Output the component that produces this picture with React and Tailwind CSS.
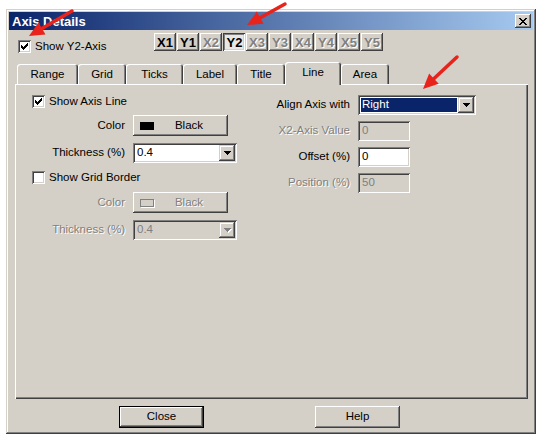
import React from "react";

function Check({ checked }) {
  const px = [
    [6, 0], [5, 1], [6, 1], [0, 2], [4, 2], [5, 2], [6, 2], [0, 3], [1, 3], [3, 3], [4, 3], [5, 3],
    [0, 4], [1, 4], [2, 4], [3, 4], [4, 4], [1, 5], [2, 5], [3, 5], [2, 6],
  ];
  return (
    <div className="w-[13px] h-[13px] shrink-0 bg-white shadow-[inset_1px_1px_0_#808080,inset_-1px_-1px_0_#fff,inset_2px_2px_0_#404040,inset_-2px_-2px_0_#d4d0c8] flex items-center justify-center">
      {checked && (
        <svg width="7" height="7" viewBox="0 0 7 7" shapeRendering="crispEdges">
          {px.map(([x, y], i) => (
            <rect key={i} x={x} y={y} width="1" height="1" fill="#000" />
          ))}
        </svg>
      )}
    </div>
  );
}

function DownArrow({ disabled }) {
  return (
    <svg width="8" height="5" viewBox="0 0 8 5" shapeRendering="crispEdges">
      {disabled && (
        <g fill="#fff">
          <rect x="1" y="1" width="7" height="1" />
          <rect x="2" y="2" width="5" height="1" />
          <rect x="3" y="3" width="3" height="1" />
          <rect x="4" y="4" width="1" height="1" />
        </g>
      )}
      <g fill={disabled ? "#808080" : "#000"}>
        <rect x="0" y="0" width="7" height="1" />
        <rect x="1" y="1" width="5" height="1" />
        <rect x="2" y="2" width="3" height="1" />
        <rect x="3" y="3" width="1" height="1" />
      </g>
    </svg>
  );
}

function DropBtn({ disabled }) {
  return (
    <div className="w-[16px] h-[16px] shrink-0 bg-[#d4d0c8] shadow-[inset_-1px_-1px_0_#404040,inset_1px_1px_0_#d4d0c8,inset_-2px_-2px_0_#808080,inset_2px_2px_0_#fff] flex items-center justify-center pl-px">
      <DownArrow disabled={disabled} />
    </div>
  );
}

function AxisBtn({ label, state }) {
  if (state === "pressed") {
    return (
      <div className="w-[22px] h-[18px] bg-[#e9e7e3] shadow-[inset_1px_1px_0_#404040,inset_-1px_-1px_0_#fff,inset_2px_2px_0_#808080,inset_-2px_-2px_0_#d4d0c8] flex items-center justify-center pt-px pl-px font-bold text-[13px] text-black">
        {label}
      </div>
    );
  }
  return (
    <div
      className={
        state === "disabled"
          ? "w-[22px] h-[18px] bg-[#d4d0c8] shadow-[inset_-1px_-1px_0_#404040,inset_1px_1px_0_#fff,inset_-2px_-2px_0_#808080,inset_2px_2px_0_#d4d0c8] flex items-center justify-center font-bold text-[13px] text-[#808080] [text-shadow:1px_1px_0_#fff]"
          : "w-[22px] h-[18px] bg-[#d4d0c8] shadow-[inset_-1px_-1px_0_#404040,inset_1px_1px_0_#fff,inset_-2px_-2px_0_#808080,inset_2px_2px_0_#d4d0c8] flex items-center justify-center font-bold text-[13px] text-black"
      }
    >
      {label}
    </div>
  );
}

function Tab({ label, w, selected }) {
  if (selected) {
    return (
      <div
        className="relative z-10 h-[23px] mb-[-1px] bg-[#d4d0c8] rounded-t-[3px] shadow-[inset_1px_1px_0_#fff,inset_-1px_0_0_#404040,inset_-2px_0_0_#808080] flex items-start justify-center pt-[5px]"
        style={{ width: w }}
      >
        {label}
      </div>
    );
  }
  return (
    <div
      className="h-[20px] bg-[#d4d0c8] rounded-t-[3px] shadow-[inset_1px_1px_0_#fff,inset_-1px_0_0_#404040,inset_-2px_0_0_#808080] flex items-center justify-center pt-px"
      style={{ width: w }}
    >
      {label}
    </div>
  );
}

function Arrow({ x1, y1, x2, y2 }) {
  const dx = x2 - x1;
  const dy = y2 - y1;
  const len = Math.hypot(dx, dy);
  const ux = dx / len;
  const uy = dy / len;
  const hl = 15;
  const hw = 7;
  const bx = x2 - ux * hl;
  const by = y2 - uy * hl;
  const px = -uy;
  const py = ux;
  const pts = `${x2},${y2} ${bx + px * hw},${by + py * hw} ${bx - px * hw},${by - py * hw}`;
  return (
    <g>
      <line x1={x1} y1={y1} x2={bx + ux * 2} y2={by + uy * 2} stroke="#e8231c" strokeWidth="3.5" strokeLinecap="round" />
      <polygon points={pts} fill="#e8231c" />
    </g>
  );
}

const Label = ({ children, disabled, w }) => (
  <div
    className={
      disabled
        ? "flex justify-end whitespace-nowrap mr-[8px] text-[#808080] [text-shadow:1px_1px_0_#fff]"
        : "flex justify-end whitespace-nowrap mr-[8px]"
    }
    style={{ width: w }}
  >
    {children}
  </div>
);

export default function App() {
  const axes = [
    ["X1", "on"], ["Y1", "on"], ["X2", "disabled"], ["Y2", "pressed"], ["X3", "disabled"],
    ["Y3", "disabled"], ["X4", "disabled"], ["Y4", "disabled"], ["X5", "disabled"], ["Y5", "disabled"],
  ];
  return (
    <div className="relative w-[544px] h-[441px] bg-white overflow-hidden pt-[9px] pl-[6px] font-['Liberation_Sans',Arial,sans-serif] text-[11.5px] text-black leading-none">
      <div className="w-[530px] h-[425px] bg-[#d4d0c8] p-[3px] shadow-[inset_-1px_-1px_0_#404040,inset_1px_1px_0_#d4d0c8,inset_-2px_-2px_0_#808080,inset_2px_2px_0_#fff] flex flex-col">
        {/* Title bar */}
        <div className="h-[18px] shrink-0 flex items-center justify-between pl-[3px] pr-[2px] bg-[linear-gradient(to_right,#0a246a,#a6caf0)]">
          <span className="text-white font-bold text-[13px]">Axis Details</span>
          <div className="w-[16px] h-[14px] bg-[#d4d0c8] shadow-[inset_-1px_-1px_0_#404040,inset_1px_1px_0_#fff,inset_-2px_-2px_0_#808080,inset_2px_2px_0_#d4d0c8] flex items-center justify-center">
            <svg width="8" height="7" viewBox="0 0 8 7" shapeRendering="crispEdges">
              <path d="M0 0h2v1h1v1h2V1h1V0h2v1H7v1H6v1H5v1h1v1h1v1h1v1H6V6H5V5H3v1H2v1H0V6h1V5h1V4h1V3H2V2H1V1H0z" fill="#000" />
            </svg>
          </div>
        </div>

        {/* Y2 checkbox + axis buttons */}
        <div className="mt-[3px] flex items-start">
          <div className="ml-[9px] w-[136px] pt-[7px] flex items-center gap-[4px]">
            <Check checked />
            <span>Show Y2-Axis</span>
          </div>
          <div className="flex gap-px">
            {axes.map(([l, s]) => (
              <AxisBtn key={l} label={l} state={s} />
            ))}
          </div>
        </div>

        {/* Tabs + panel */}
        <div className="mt-[9px] ml-[6px] flex flex-col">
          <div className="h-[22px] flex items-end pl-[2px]">
            <Tab label="Range" w={61} />
            <Tab label="Grid" w={48} />
            <Tab label="Ticks" w={57} />
            <Tab label="Label" w={54} />
            <Tab label="Title" w={48} />
            <Tab label="Line" w={56} selected />
            <Tab label="Area" w={48} />
          </div>
          <div className="w-[513px] h-[315px] bg-[#d4d0c8] shadow-[inset_1px_1px_0_#fff,inset_-1px_-1px_0_#404040,inset_-2px_-2px_0_#808080] flex pl-[17px] pt-[11px]">
            {/* Left column */}
            <div className="w-[205px] flex flex-col">
              <div className="flex items-center gap-[4px] h-[13px]">
                <Check checked />
                <span>Show Axis Line</span>
              </div>
              <div className="flex items-center mt-[7px]">
                <Label w={93}>Color</Label>
                <div className="w-[95px] h-[21px] bg-[#d4d0c8] shadow-[inset_-1px_-1px_0_#404040,inset_1px_1px_0_#fff,inset_-2px_-2px_0_#808080,inset_2px_2px_0_#d4d0c8] flex items-center pl-[7px] pr-[4px]">
                  <div className="w-[14px] h-[8px] bg-black" />
                  <span className="flex-1 text-center">Black</span>
                </div>
              </div>
              <div className="flex items-center mt-[7px]">
                <Label w={93}>Thickness (%)</Label>
                <div className="w-[104px] h-[20px] bg-white shadow-[inset_1px_1px_0_#808080,inset_-1px_-1px_0_#fff,inset_2px_2px_0_#404040,inset_-2px_-2px_0_#d4d0c8] flex items-center pl-[4px] pr-[2px]">
                  <span className="flex-1">0.4</span>
                  <DropBtn />
                </div>
              </div>
              <div className="flex items-center gap-[4px] h-[13px] mt-[8px]">
                <Check />
                <span>Show Grid Border</span>
              </div>
              <div className="flex items-center mt-[8px]">
                <Label w={93} disabled>Color</Label>
                <div className="w-[95px] h-[21px] bg-[#d4d0c8] shadow-[inset_-1px_-1px_0_#404040,inset_1px_1px_0_#fff,inset_-2px_-2px_0_#808080,inset_2px_2px_0_#d4d0c8] flex items-center pl-[7px] pr-[4px]">
                  <div className="w-[14px] h-[8px] border border-[#808080] shadow-[1px_1px_0_#fff]" />
                  <span className="flex-1 text-center text-[#808080] [text-shadow:1px_1px_0_#fff]">Black</span>
                </div>
              </div>
              <div className="flex items-center mt-[7px]">
                <Label w={93} disabled>Thickness (%)</Label>
                <div className="w-[104px] h-[20px] bg-[#d4d0c8] shadow-[inset_1px_1px_0_#808080,inset_-1px_-1px_0_#fff,inset_2px_2px_0_#404040,inset_-2px_-2px_0_#d4d0c8] flex items-center pl-[4px] pr-[2px]">
                  <span className="flex-1 text-[#808080]">0.4</span>
                  <DropBtn disabled />
                </div>
              </div>
            </div>

            {/* Right column */}
            <div className="ml-[43px] flex flex-col">
              <div className="flex items-center">
                <Label w={70}>Align Axis with</Label>
                <div className="w-[118px] h-[20px] bg-white shadow-[inset_1px_1px_0_#808080,inset_-1px_-1px_0_#fff,inset_2px_2px_0_#404040,inset_-2px_-2px_0_#d4d0c8] flex items-center pl-[3px] pr-[2px]">
                  <div className="flex-1 h-[14px] mr-[1px] bg-[#0a246a] text-white flex items-center pl-[1px]">Right</div>
                  <DropBtn />
                </div>
              </div>
              <div className="flex items-center mt-[6px]">
                <Label w={70} disabled>X2-Axis Value</Label>
                <div className="w-[52px] h-[20px] bg-[#d4d0c8] shadow-[inset_1px_1px_0_#808080,inset_-1px_-1px_0_#fff,inset_2px_2px_0_#404040,inset_-2px_-2px_0_#d4d0c8] flex items-center pl-[4px] text-[#808080]">
                  0
                </div>
              </div>
              <div className="flex items-center mt-[6px]">
                <Label w={70}>Offset (%)</Label>
                <div className="w-[52px] h-[20px] bg-white shadow-[inset_1px_1px_0_#808080,inset_-1px_-1px_0_#fff,inset_2px_2px_0_#404040,inset_-2px_-2px_0_#d4d0c8] flex items-center pl-[4px]">
                  0
                </div>
              </div>
              <div className="flex items-center mt-[6px]">
                <Label w={70} disabled>Position (%)</Label>
                <div className="w-[52px] h-[20px] bg-[#d4d0c8] shadow-[inset_1px_1px_0_#808080,inset_-1px_-1px_0_#fff,inset_2px_2px_0_#404040,inset_-2px_-2px_0_#d4d0c8] flex items-center pl-[4px] text-[#808080]">
                  50
                </div>
              </div>
            </div>
          </div>
        </div>

        {/* Bottom buttons */}
        <div className="mt-[7px] ml-[110px] flex gap-[111px]">
          <div className="w-[85px] h-[22px] border border-black">
            <div className="w-full h-full bg-[#d4d0c8] shadow-[inset_-1px_-1px_0_#404040,inset_1px_1px_0_#fff,inset_-2px_-2px_0_#808080,inset_2px_2px_0_#d4d0c8] flex items-center justify-center">
              Close
            </div>
          </div>
          <div className="w-[85px] h-[22px] bg-[#d4d0c8] shadow-[inset_-1px_-1px_0_#404040,inset_1px_1px_0_#fff,inset_-2px_-2px_0_#808080,inset_2px_2px_0_#d4d0c8] flex items-center justify-center">
            Help
          </div>
        </div>
      </div>

      <svg className="absolute inset-0 pointer-events-none" width="544" height="441" viewBox="0 0 544 441">
        <Arrow x1={72} y1={11} x2={29} y2={36} />
        <Arrow x1={285} y1={4} x2={247} y2={25} />
        <Arrow x1={457} y1={57} x2={423} y2={89} />
      </svg>
    </div>
  );
}
